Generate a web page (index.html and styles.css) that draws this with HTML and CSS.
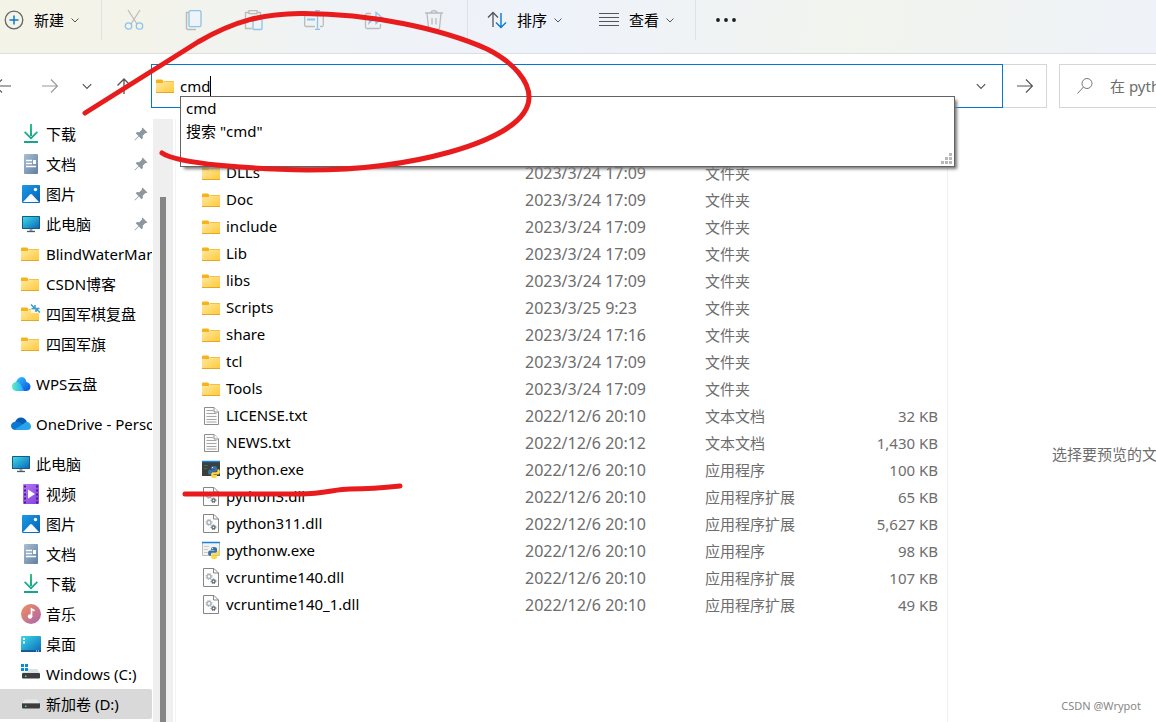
FILE: index.html
```html
<!DOCTYPE html>
<html lang="zh-CN">
<head>
<meta charset="utf-8">
<title>python</title>
<link rel="stylesheet" href="styles.css">
</head>
<body>
<svg class="defs" aria-hidden="true">
  <defs>
    <linearGradient id="gFolder" x1="0" y1="0" x2="1" y2="1"><stop offset="0" stop-color="#ffe9a3"/><stop offset="1" stop-color="#ffc938"/></linearGradient>
    <linearGradient id="gDown" x1="0" y1="0" x2="0" y2="1"><stop offset="0" stop-color="#2cc57c"/><stop offset="1" stop-color="#12a08f"/></linearGradient>
    <linearGradient id="gDoc" x1="0" y1="0" x2="1" y2="1"><stop offset="0" stop-color="#a9bfd4"/><stop offset="1" stop-color="#5f7f9f"/></linearGradient>
    <linearGradient id="gPic" x1="0" y1="0" x2="1" y2="1"><stop offset="0" stop-color="#1c9be6"/><stop offset="1" stop-color="#0560b5"/></linearGradient>
    <linearGradient id="gPc" x1="0" y1="0" x2="1" y2="1"><stop offset="0" stop-color="#3ddbe6"/><stop offset="1" stop-color="#0b68bd"/></linearGradient>
    <linearGradient id="gVid" x1="0" y1="0" x2="1" y2="1"><stop offset="0" stop-color="#b777f2"/><stop offset="1" stop-color="#8440e0"/></linearGradient>
    <linearGradient id="gMus" x1="0" y1="0" x2="1" y2="1"><stop offset="0" stop-color="#f29056"/><stop offset="1" stop-color="#a964b4"/></linearGradient>
    <linearGradient id="gWps" x1="0" y1="0" x2="1" y2="1"><stop offset="0" stop-color="#35c5ff"/><stop offset="1" stop-color="#0b4fe0"/></linearGradient>
    <linearGradient id="gWps2" x1="0" y1="0" x2="1" y2="0"><stop offset="0" stop-color="#5df0c0"/><stop offset="1" stop-color="#22a8ff"/></linearGradient>
  </defs>
  <symbol id="folder" viewBox="0 0 20 20"><path d="M0 4.500Q0 3.500 1 3.500H6L7.500 5V8H0Z" fill="#f5b21b"/><path d="M0 7H6.500L8 5.500H18V17H0Z" fill="url(#gFolder)"/><path d="M0 16.500H18" stroke="#e5a727"/><path d="M8 5.500H18" stroke="#f3c04a"/></symbol>
  <symbol id="sync" viewBox="0 0 20 20"><use href="#folder"/><path d="M10 0h9v9h-9z" fill="#fff" opacity=".75"/><path d="M10 .5l4 4m0-3.500v3.500h-3.500M19 8.500l-4-4m0 3.500v-3.500h3.500" fill="none" stroke="#3a9bd2" stroke-width="1.500"/></symbol>
  <symbol id="download" viewBox="0 0 20 20"><path d="M9 0h2v12h-2zM3 8.500l1.300-1.200L10 13l5.700-5.700L17 8.500l-7 7z" fill="url(#gDown)"/><path d="M3 18h14" stroke="#14a88a" stroke-width="2"/></symbol>
  <symbol id="doc" viewBox="0 0 20 20"><rect x="3" width="14" height="20" rx="1" fill="url(#gDoc)"/><path d="M5 6.500h6M5 9.500h6M5 12.500h10" stroke="#fff" stroke-width="1.300"/><path d="M12 6h3v4h-3z" fill="#fff"/></symbol>
  <symbol id="pic" viewBox="0 0 20 20"><rect x="1" y="1" width="18" height="18" rx="1" fill="url(#gPic)"/><path d="M2 18l7-7.500q1-1 2 0L18 18Z" fill="#f7fbff"/><circle cx="14.500" cy="5.500" r="1.700" fill="#fff"/></symbol>
  <symbol id="pc" viewBox="0 0 20 20"><rect x="1" y="2" width="18" height="13" rx=".5" fill="#195a80"/><path d="M2 3h16v11H2z" fill="url(#gPc)"/><path d="M8.500 15h3v2h-3z" fill="#9aa4aa"/><path d="M6 17.500h8" stroke="#4c5960" stroke-width="1.300"/></symbol>
  <symbol id="video" viewBox="0 0 20 20"><rect x="2" width="16" height="20" rx="1" fill="url(#gVid)"/><path d="M4 1.500v18M16 1.500v18" stroke="#45208c" stroke-width="2" stroke-dasharray="2 2"/><path d="M7 5.500l7 4.500-7 4.500z" fill="#fff"/></symbol>
  <symbol id="music" viewBox="0 0 20 20"><circle cx="10" cy="10" r="10" fill="url(#gMus)"/><circle cx="9" cy="12.500" r="2.200" fill="#fff"/><path d="M10.500 13V5l3 1.800" fill="none" stroke="#fff" stroke-width="1.700"/></symbol>
  <symbol id="desk" viewBox="0 0 20 20"><rect y="2" width="20" height="16" rx="1" fill="url(#gPc)"/><path d="M0 17h20" stroke="#135f91" stroke-width="2"/><path d="M2 4h2v2H2zM2 7.500h2v2H2zM15 16.500h1v1h-1zM17 16.500h1v1h-1z" fill="#fff"/></symbol>
  <symbol id="drive" viewBox="0 0 20 20"><path d="M4 5.500h12l3 4H1z" fill="#e6e9ec"/><rect x="1" y="9" width="18" height="5.500" rx="1" fill="#3d3d3d"/><path d="M1.500 9.500h17" stroke="#777"/><path d="M4 11.500h1.500v1.500H4z" fill="#4fe080"/></symbol>
  <symbol id="windrive" viewBox="0 0 20 20"><path d="M6 5h10l3 4H1z" fill="#dfe2e5"/><rect x="1" y="9" width="18" height="5.500" rx="1" fill="#3d3d3d"/><path d="M0 0h7v7.500H0z" fill="#fff"/><path d="M0 0h3v3H0zM4 0h3v3H4zM0 4h3v3H0zM4 4h3v3H4z" fill="#078bdc"/><path d="M4 11.500h1.500v1.500H4z" fill="#4fe080"/></symbol>
  <symbol id="wps" viewBox="0 0 20 20"><path d="M5 17Q4 9 6 6Q9 1.500 13 3.500Q15 5 15.500 8Q19.500 9 19.500 13Q19 17 15 17Z" fill="url(#gWps)"/><path d="M5.500 17Q1 16.500 1 12.500Q1 8.500 5 8Q8 7.500 10 11L13 17Z" fill="url(#gWps2)"/></symbol>
  <symbol id="onedrive" viewBox="0 0 20 20"><path d="M4 9Q5 3.500 10 3.500Q14 3.500 16 8L12 11Z" fill="#0a5db5"/><path d="M4 16Q0 15 0 12Q0 8 5 7.500Q8 7.500 12 10.500L8 16Z" fill="#0c78d4"/><path d="M3.500 15.500L12 10.300Q15 7 18 8.500Q20 10 20 12.500Q20 16 16 16H6Z" fill="#27a4ea"/></symbol>
  <symbol id="pin" viewBox="0 0 14 14"><path d="M8.500 .5l5 5-1.500.700-.600-.200-2.700 2.700.2 2.300-1.300 1.300L4.900 9.500 1 13.500.5 13 4.500 9.100 1.700 6.300 3 5l2.300.2L8 2.500 7.800 1.800z" fill="#8d979f"/></symbol>
  <symbol id="txt" viewBox="0 0 20 20"><path d="M2.500 1.500H12L16.500 6V18.500H2.500Z" fill="#fbfbfb" stroke="#8d8d8d"/><path d="M12 1.500V6h4.500" fill="#fff" stroke="#8d8d8d"/><path d="M4.500 4.500H11M4.500 7.500H14.500M4.500 10.500H14.500M4.500 13.500H14.500M4.500 16H14.500" stroke="#a6a6a6"/></symbol>
  <symbol id="dll" viewBox="0 0 20 20"><path d="M1.500 .5H12L16.500 5V18.500H1.500Z" fill="#fdfdfd" stroke="#858585"/><path d="M11.500 .5V5h5" fill="none" stroke="#858585"/><circle cx="7" cy="8.500" r="2" fill="none" stroke="#a9b1ba" stroke-width="1.400"/><circle cx="7" cy="8.500" r="3" fill="none" stroke="#a9b1ba" stroke-dasharray="1.200 1.200"/><circle cx="11.500" cy="13.300" r="1.500" fill="none" stroke="#5c6873" stroke-width="1.300"/><circle cx="11.500" cy="13.300" r="2.400" fill="none" stroke="#5c6873" stroke-dasharray="1 1"/></symbol>
  <symbol id="snake" viewBox="0 0 12 12"><path d="M6 0Q3 0 3 2V3H6.500V3.500H1.500Q0 4 0 6.200Q0 8.500 1.500 8.700H3V7Q3.200 5.700 4.500 5.700H8Q9 5.500 9 4.500V2Q9 0 6 0Z" fill="#3873a8"/><path d="M6 12Q9 12 9 10V9H5.500V8.500H10.500Q12 8 12 5.700Q12 3.500 10.500 3.200H9.500V5Q9.200 6.300 8 6.300H4.500Q3.200 6.500 3.200 7.500V10Q3 12 6 12Z" fill="#ffd646"/><circle cx="4.500" cy="1.600" r=".6" fill="#fff"/></symbol>
  <symbol id="py" viewBox="0 0 20 20"><path d="M0 1h18v15H0z" fill="#3a3f42"/><path d="M0 1.500h18" stroke="#1683d8" stroke-width="1.500"/><path d="M2 5.500h4M2 8.500h3" stroke="#39734a"/><use href="#snake" x="6" y="6" width="12" height="12"/></symbol>
  <symbol id="pyw" viewBox="0 0 20 20"><path d="M.5 1.500h17v13H.5z" fill="#f2f2f2" stroke="#b9bdc0"/><path d="M0 1.500h18" stroke="#1683d8" stroke-width="1.500"/><path d="M2 5.500h5M2 8.500h4M2 11.500h4" stroke="#c7cacc"/><use href="#snake" x="6" y="6" width="12" height="12"/></symbol>
  <symbol id="chev" viewBox="0 0 10 10"><path d="M1.500 3.500L5 7l3.500-3.500" fill="none" stroke="currentColor"/></symbol>
  <symbol id="right" viewBox="0 0 16 16"><path d="M0 8h15M9 1.500L15.500 8 9 14.500" fill="none" stroke="currentColor" stroke-width="1.200"/></symbol>
</svg>

<header class="toolbar">
  <div class="tool-group group-new">
    <button class="tool tool-new"><svg class="i20" viewBox="0 0 20 20"><circle cx="10" cy="10" r="8.800" fill="none" stroke="#666" stroke-width="1.300"/><path d="M10 5.500v9M5.500 10h9" stroke="#0a78d0" stroke-width="1.500"/></svg><span>新建</span><svg class="i10"><use href="#chev"/></svg></button>
  </div>
  <div class="tool-group group-edit">
    <button class="tool" aria-label="剪切" disabled><svg class="i20" viewBox="0 0 20 20"><path d="M4 0l9 14M16 0L7 14" stroke="#bbb" stroke-width="1.200"/><g fill="none" stroke="#8bc3ea" stroke-width="1.300"><circle cx="4.500" cy="16" r="3.200"/><circle cx="15.500" cy="16" r="3.200"/></g></svg></button>
    <button class="tool" aria-label="复制" disabled><svg class="i20" viewBox="0 0 20 20"><path d="M5 2.500H2.500V18Q2.500 19.500 4 19.500H12" fill="none" stroke="#bbb" stroke-width="1.500"/><rect x="5" y=".7" width="12" height="16" rx="1.500" fill="#eef3f8" stroke="#8bc3ea" stroke-width="1.300"/></svg></button>
    <button class="tool" aria-label="粘贴" disabled><svg class="i20" viewBox="0 0 20 20"><path d="M8 18.500H1.500V2.500H5M13 2.500H16.500V6M5 .7h8v3H5z" fill="none" stroke="#bbb" stroke-width="1.300"/><rect x="9" y="7.500" width="9" height="12" rx="1" fill="#eef3f8" stroke="#8bc3ea" stroke-width="1.300"/></svg></button>
    <button class="tool" aria-label="重命名" disabled><svg class="i20" viewBox="0 0 20 20"><path d="M11 16.500H2Q.7 16.500.7 15V4.500Q.7 3 2 3h9M16 3h2q1.300 0 1.300 1.500V15q0 1.500-1.300 1.500h-2" fill="none" stroke="#bbb" stroke-width="1.300"/><path d="M3 9.500h8" stroke="#8bc3ea" stroke-width="2"/><path d="M13.500 1v18M11 19.300h5M11 .7h5" stroke="#8bc3ea" stroke-width="1.300"/></svg></button>
    <button class="tool" aria-label="共享" disabled><svg class="i20" viewBox="0 0 20 20"><path d="M7 3.500H3q-1.500 0-1.500 1.500v12q0 1.500 1.500 1.500h12q1.500 0 1.500-1.500v-3" fill="none" stroke="#bbb" stroke-width="1.300"/><path d="M5 13Q6 7 12 7V2.500L18.500 8 12 13.500V10Q8 9.500 5 13Z" fill="none" stroke="#8bc3ea" stroke-width="1.300"/></svg></button>
    <button class="tool" aria-label="删除" disabled><svg class="i20" viewBox="0 0 20 20"><path d="M1 3h18M7 3Q7 .7 10 .7T13 3M3 3l1.500 15q.2 1.300 1.500 1.300h8q1.300 0 1.500-1.300L17 3M8 8v6.500M12 8v6.500" fill="none" stroke="#bbb" stroke-width="1.300"/></svg></button>
  </div>
  <div class="tool-group group-view">
    <button class="tool"><svg class="i20" viewBox="0 0 20 20"><path d="M6 17V2.500M1 7.500L6 2.500l5 5" fill="none" stroke="#555" stroke-width="1.300"/><path d="M14 3v14.500M9 12.500l5 5 5-5" fill="none" stroke="#0a78d0" stroke-width="1.400"/></svg><span>排序</span><svg class="i10"><use href="#chev"/></svg></button>
    <button class="tool"><svg class="i20" viewBox="0 0 20 20"><path d="M0 3.500h20M0 7.500h20M0 11.500h20M0 15.500h20" stroke="#555" stroke-width="1.200"/></svg><span>查看</span><svg class="i10"><use href="#chev"/></svg></button>
  </div>
  <div class="tool-group group-more">
    <button class="tool" aria-label="更多"><svg class="i20" viewBox="0 0 20 20"><g fill="#1b1b1b"><circle cx="2" cy="10" r="1.900"/><circle cx="10" cy="10" r="1.900"/><circle cx="18" cy="10" r="1.900"/></g></svg></button>
  </div>
</header>

<div class="navbar">
  <nav class="history">
    <button aria-label="后退"><svg class="i16" viewBox="0 0 16 16"><path d="M16 8H1M7 1.500L.5 8 7 14.500" fill="none" stroke="currentColor" stroke-width="1.200"/></svg></button>
    <button class="dim" aria-label="前进"><svg class="i16"><use href="#right"/></svg></button>
    <button aria-label="最近"><svg class="i12"><use href="#chev"/></svg></button>
    <button aria-label="向上"><svg class="i16" viewBox="0 0 16 16"><path d="M8 16V1M1.500 7.500L8 1l6.500 6.500" fill="none" stroke="currentColor" stroke-width="1.300"/></svg></button>
  </nav>
  <div class="address">
    <svg class="i20"><use href="#folder"/></svg>
    <input class="path" type="text" value="cmd" aria-label="地址"><span class="caret"></span>
    <button class="drop" aria-label="展开"><svg class="i12"><use href="#chev"/></svg></button>
    <div class="suggest">
      <ul>
        <li>cmd</li>
        <li>搜索 "cmd"</li>
      </ul>
      <svg class="grip" viewBox="0 0 12 12"><path d="M8 0h3v3H8zM4 4h3v3H4zM8 4h3v3H8zM0 8h3v3H0zM4 8h3v3H4zM8 8h3v3H8z" fill="#b9b9b9"/></svg>
    </div>
  </div>
  <button class="go" aria-label="转到"><svg class="i16"><use href="#right"/></svg></button>
  <label class="search"><svg class="i16" viewBox="0 0 16 16"><circle cx="10" cy="5.500" r="5" fill="none" stroke="#777"/><path d="M6.500 9L.5 15.500" stroke="#777"/></svg><input type="text" placeholder="在 python 中搜索" aria-label="搜索"></label>
</div>

<div class="body">
  <aside class="sidebar">
    <ul class="tree sub">
      <li><svg class="i20"><use href="#download"/></svg><span>下载</span><svg class="pin"><use href="#pin"/></svg></li>
      <li><svg class="i20"><use href="#doc"/></svg><span>文档</span><svg class="pin"><use href="#pin"/></svg></li>
      <li><svg class="i20"><use href="#pic"/></svg><span>图片</span><svg class="pin"><use href="#pin"/></svg></li>
      <li><svg class="i20"><use href="#pc"/></svg><span>此电脑</span><svg class="pin"><use href="#pin"/></svg></li>
      <li><svg class="i20"><use href="#folder"/></svg><span>BlindWaterMark</span></li>
      <li><svg class="i20"><use href="#folder"/></svg><span>CSDN博客</span></li>
      <li><svg class="i20"><use href="#sync"/></svg><span>四国军棋复盘</span></li>
      <li><svg class="i20"><use href="#folder"/></svg><span>四国军旗</span></li>
    </ul>
    <ul class="tree"><li><svg class="i20"><use href="#wps"/></svg><span>WPS云盘</span></li></ul>
    <ul class="tree"><li><svg class="i20"><use href="#onedrive"/></svg><span>OneDrive - Personal</span></li></ul>
    <div>
      <ul class="tree"><li><svg class="i20"><use href="#pc"/></svg><span>此电脑</span></li></ul>
      <ul class="tree sub">
        <li><svg class="i20"><use href="#video"/></svg><span>视频</span></li>
        <li><svg class="i20"><use href="#pic"/></svg><span>图片</span></li>
        <li><svg class="i20"><use href="#doc"/></svg><span>文档</span></li>
        <li><svg class="i20"><use href="#download"/></svg><span>下载</span></li>
        <li><svg class="i20"><use href="#music"/></svg><span>音乐</span></li>
        <li><svg class="i20"><use href="#desk"/></svg><span>桌面</span></li>
        <li><svg class="i20"><use href="#windrive"/></svg><span>Windows (C:)</span></li>
        <li class="selected"><svg class="i20"><use href="#drive"/></svg><span>新加卷 (D:)</span></li>
      </ul>
    </div>
  </aside>
  <div class="scrollbar"><div class="thumb"></div></div>
  <main class="files">
    <table>
      <colgroup><col><col class="c-date"><col class="c-type"><col class="c-size"></colgroup>
      <tbody>
        <tr><td><svg class="i20"><use href="#folder"/></svg>DLLs</td><td>2023/3/24 17:09</td><td>文件夹</td><td></td></tr>
        <tr><td><svg class="i20"><use href="#folder"/></svg>Doc</td><td>2023/3/24 17:09</td><td>文件夹</td><td></td></tr>
        <tr><td><svg class="i20"><use href="#folder"/></svg>include</td><td>2023/3/24 17:09</td><td>文件夹</td><td></td></tr>
        <tr><td><svg class="i20"><use href="#folder"/></svg>Lib</td><td>2023/3/24 17:09</td><td>文件夹</td><td></td></tr>
        <tr><td><svg class="i20"><use href="#folder"/></svg>libs</td><td>2023/3/24 17:09</td><td>文件夹</td><td></td></tr>
        <tr><td><svg class="i20"><use href="#folder"/></svg>Scripts</td><td>2023/3/25 9:23</td><td>文件夹</td><td></td></tr>
        <tr><td><svg class="i20"><use href="#folder"/></svg>share</td><td>2023/3/24 17:16</td><td>文件夹</td><td></td></tr>
        <tr><td><svg class="i20"><use href="#folder"/></svg>tcl</td><td>2023/3/24 17:09</td><td>文件夹</td><td></td></tr>
        <tr><td><svg class="i20"><use href="#folder"/></svg>Tools</td><td>2023/3/24 17:09</td><td>文件夹</td><td></td></tr>
        <tr><td><svg class="i20"><use href="#txt"/></svg>LICENSE.txt</td><td>2022/12/6 20:10</td><td>文本文档</td><td>32 KB</td></tr>
        <tr><td><svg class="i20"><use href="#txt"/></svg>NEWS.txt</td><td>2022/12/6 20:12</td><td>文本文档</td><td>1,430 KB</td></tr>
        <tr><td><svg class="i20"><use href="#py"/></svg>python.exe</td><td>2022/12/6 20:10</td><td>应用程序</td><td>100 KB</td></tr>
        <tr><td><svg class="i20"><use href="#dll"/></svg>python3.dll</td><td>2022/12/6 20:10</td><td>应用程序扩展</td><td>65 KB</td></tr>
        <tr><td><svg class="i20"><use href="#dll"/></svg>python311.dll</td><td>2022/12/6 20:10</td><td>应用程序扩展</td><td>5,627 KB</td></tr>
        <tr><td><svg class="i20"><use href="#pyw"/></svg>pythonw.exe</td><td>2022/12/6 20:10</td><td>应用程序</td><td>98 KB</td></tr>
        <tr><td><svg class="i20"><use href="#dll"/></svg>vcruntime140.dll</td><td>2022/12/6 20:10</td><td>应用程序扩展</td><td>107 KB</td></tr>
        <tr><td><svg class="i20"><use href="#dll"/></svg>vcruntime140_1.dll</td><td>2022/12/6 20:10</td><td>应用程序扩展</td><td>49 KB</td></tr>
      </tbody>
    </table>
  </main>
  <section class="preview">
    <p class="hint">选择要预览的文件。</p>
    <p class="credit">CSDN @Wrypot</p>
  </section>
</div>

<svg class="ink" width="1156" height="722" viewBox="0 0 1156 722" aria-hidden="true">
  <g fill="none" stroke="#e81c1c" stroke-width="5" stroke-linecap="round" stroke-linejoin="round">
    <path d="M85 113L198 42C236 20 264 14 300 13.500C370 13 442 29 487 49C515 63 529 82 529 97C529 122 492 140 450 152C400 166 350 170 308 170C250 169 178 164 162 153"/>
    <path d="M185 494H300C325 494 335 489 350 489C370 489 382 488 400 486"/>
  </g>
</svg>
</body>
</html>
```

FILE: styles.css
```css
* { box-sizing: border-box; }
body {
  margin: 0;
  height: 100vh;
  overflow: hidden;
  display: flex;
  flex-direction: column;
  position: relative;
  background: #fff;
  color: #000;
  font: 15px/20px "Noto Sans", "Noto Sans CJK SC", sans-serif;
}
button, input { font: inherit; color: inherit; background: none; border: 0; padding: 0; margin: 0; outline: 0; }
ul, p { margin: 0; padding: 0; list-style: none; }
svg { flex: none; display: block; overflow: visible; }
.defs { position: absolute; width: 0; height: 0; }
.i20 { width: 20px; height: 20px; }
.i16 { width: 16px; height: 16px; }
.i12 { width: 12px; height: 12px; }
.i10 { width: 10px; height: 10px; }

.toolbar {
  flex: none;
  height: 54px;
  padding-bottom: 13px;
  display: flex;
  border-bottom: 1px solid #dcdedf;
  background: linear-gradient(100deg, #f4f3e8 0%, #f3f3e9 12%, #eff3f6 30%, #eef2fa 48%, #f0f3f5 60%, #f2f4ee 74%, #eff2f8 100%);
}
.tool-group { display: flex; align-items: center; border-right: 1px solid #dfe2e2; }
.group-new { width: 102px; padding-left: 4px; }
.group-edit { padding: 0 23px 0 22px; gap: 40px; }
.group-view { padding: 0 21px 0 19px; gap: 37px; }
.group-more { padding-left: 20px; border: 0; }
.tool { display: flex; align-items: center; gap: 10px; }
.tool .i10 { margin-left: -4px; margin-right: -1px; color: #555; }

.navbar { flex: none; height: 65px; display: flex; align-items: center; padding: 0 0 1px; position: relative; z-index: 2; }
.history { width: 151px; display: flex; align-items: center; gap: 28px; margin-left: -5px; margin-right: 5px; color: #555; }
.history button:nth-child(3) { margin: 0 -5px; }
.history .dim { color: #999; margin-left: 3px; }
.address {
  position: relative;
  flex: 1;
  height: 44px;
  display: flex;
  align-items: center;
  padding-left: 4px;
  border: 1px solid #0078d4;
}
.path { field-sizing: content; margin-left: 4px; }
.caret { width: 1px; height: 20px; background: #000; }
.drop { margin-left: auto; margin-right: 15px; color: #555; }
.suggest {
  position: absolute;
  top: 31px;
  left: 28px;
  right: 47px;
  height: 71px;
  padding-left: 5px;
  background: #fff;
  border: 1px solid #646464;
  box-shadow: 3px 3px 3px -1px #777;
}
.suggest li { height: 23px; line-height: 23px; }
.grip { position: absolute; right: 1px; bottom: 1px; width: 12px; height: 12px; }
.go { width: 44px; height: 44px; display: grid; place-items: center; border: 1px solid #d5d5d5; border-left: 0; color: #555; }
.search { width: 97px; height: 44px; margin-left: 12px; padding-left: 17px; display: flex; align-items: center; gap: 17px; border: 1px solid #d5d5d5; border-right: 0; overflow: hidden; }
.search input { flex: none; width: 160px; }
.search input::placeholder { color: #6d6d6d; opacity: 1; }

.body { flex: 1; min-height: 0; display: grid; grid-template-columns: 153px 20px minmax(0, 1fr) 208px; }
.sidebar { display: flex; flex-direction: column; gap: 10px; overflow: hidden; padding-right: 1px; }
.tree li { height: 30px; padding: 0 4px 0 11px; display: flex; align-items: center; gap: 5px; overflow: hidden; white-space: nowrap; }
.tree.sub li { padding-left: 21px; }
.tree .selected { background: #d9d9d9; border-radius: 0 2px 2px 0; }
.tree li:not(:has(.pin)) { padding-right: 0; }
.pin { width: 14px; height: 14px; margin-left: auto; }
.scrollbar { background: #efefef; padding: 78px 7px 0; }
.thumb { height: 100%; background: #858585; }
.files { margin-left: 2px; border-left: 1px solid #f3f3f3; border-right: 1px solid #f0f0f0; padding-top: 40px; overflow: hidden; }
table { width: 100%; table-layout: fixed; border-collapse: collapse; }
.c-date { width: 180px; }
.c-type { width: 140px; }
.c-size { width: 102px; }
td { height: 27px; padding: 0; color: #6d6d6d; white-space: nowrap; }
td:first-child { color: #000; padding-left: 26px; }
td:nth-child(2) { font-size: 16px; }
td:last-child { text-align: right; padding-right: 9px; }
td .i20 { display: inline-block; vertical-align: middle; margin: -2px 4px 0 0; }
.preview { display: flex; flex-direction: column; justify-content: space-between; color: #6d6d6d; white-space: nowrap; overflow: hidden; }
.hint { padding: 325px 0 0 104px; }
.credit { padding: 0 15px 6px 0; text-align: right; font-size: 11px; color: #888; }

.ink { position: absolute; top: 0; left: 0; z-index: 3; pointer-events: none; }
```
